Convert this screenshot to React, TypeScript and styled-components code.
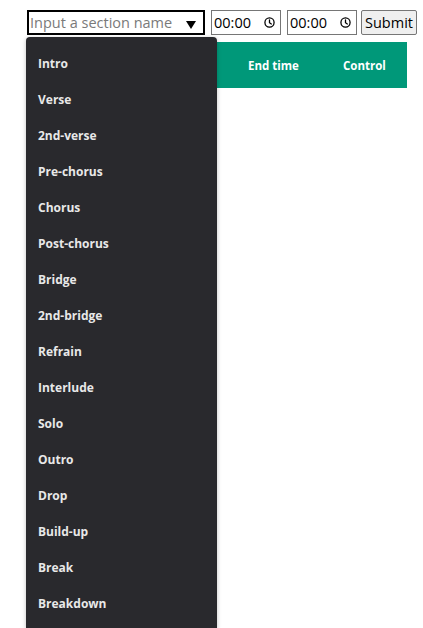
import {FC, useState} from "react";
import styled, {createGlobalStyle} from "styled-components";

const GlobalStyle = createGlobalStyle`
  html {
    overflow: hidden;
  }
  body {
    margin: 0;
    padding: 0;
    background: #ffffff;
    font-family: "Open Sans", "Noto Sans", sans-serif;
  }
`

const StyledPage = styled.div`
  min-height: 100vh;
  box-sizing: border-box;
  padding: 10px 0 0 27px;
`
const StyledForm = styled.form`
  display: flex;
  align-items: center;
  gap: 6px;
  position: relative;
`
const StyledNameBox = styled.div`
  position: relative;
  width: 178px;
  height: 25px;
  box-sizing: border-box;
  border: 2px solid #000000;
  display: flex;
  align-items: center;
`
const StyledNameInput = styled.input`
  border: none;
  outline: none;
  flex: 1;
  min-width: 0;
  height: 100%;
  padding: 0 0 0 1px;
  font-family: "Open Sans", "Noto Sans", sans-serif;
  font-size: 14.5px;
  color: #000;
  background: transparent;

  &::placeholder {
    color: #7a7a7a;
  }
`
const StyledArrow = styled.span`
  width: 0;
  height: 0;
  border-left: 5px solid transparent;
  border-right: 5px solid transparent;
  border-top: 8px solid #000;
  margin: 4px 7px 0 0;
`
const StyledTimeBox = styled.div`
  width: 70px;
  height: 25px;
  box-sizing: border-box;
  border: 1px solid #767676;
  display: flex;
  align-items: center;
  justify-content: space-between;
  padding: 0 5px 0 2px;
  font-family: "Open Sans", "Noto Sans", sans-serif;
  font-size: 14.5px;
  color: #000;
`
const StyledSubmit = styled.button`
  height: 25px;
  width: 56px;
  margin-left: -2px;
  box-sizing: border-box;
  border: 1px solid #767676;
  border-radius: 2px;
  background: #efefef;
  font-family: "Open Sans", "Noto Sans", sans-serif;
  font-size: 14.5px;
  color: #000;
  padding: 0;
`
const StyledDropdown = styled.ul`
  position: absolute;
  left: -1px;
  top: 27px;
  width: 191px;
  height: 591px;
  overflow: hidden;
  margin: 0;
  padding: 8px 0 0;
  box-sizing: border-box;
  list-style: none;
  background: #29292d;
  border-radius: 4px 4px 0 0;
  box-shadow: 0 1px 4px rgba(0, 0, 0, 0.25);
  z-index: 10;
`
const StyledOption = styled.li`
  height: 36px;
  display: flex;
  align-items: center;
  padding-left: 12px;
  font-size: 12px;
  font-weight: 700;
  color: #e8e8e8;
`
const StyledTable = styled.div`
  margin-top: 7px;
  width: 380px;
`
const StyledHeadRow = styled.div`
  display: grid;
  grid-template-columns: 110px 96px 95px 79px;
  height: 46px;
  align-items: center;
  background: #009879;
  color: #ffffff;
`
const StyledHeadCell = styled.div`
  padding: 0 15px;
  font-size: 11.5px;
  font-weight: 700;
  white-space: nowrap;
`

const sections = [
    "Intro", "Verse", "2nd-verse", "Pre-chorus", "Chorus", "Post-chorus",
    "Bridge", "2nd-bridge", "Refrain", "Interlude", "Solo", "Outro",
    "Drop", "Build-up", "Break", "Breakdown",
]

const ClockIcon: FC = () => (
    <svg width="11" height="11" viewBox="0 0 12 12" fill="none" stroke="#000" strokeWidth="1.4">
        <circle cx="6" cy="6" r="5"/>
        <path d="M6 3.2V6.2L8 7.6" strokeLinecap="round"/>
    </svg>
)

export default function App() {
    const [name, setName] = useState('')
    return (
        <StyledPage>
            <GlobalStyle/>
            <StyledForm onSubmit={(e) => e.preventDefault()}>
                <StyledNameBox>
                    <StyledNameInput
                        value={name}
                        onChange={(e) => setName(e.target.value)}
                        placeholder="Input a section name"
                    />
                    <StyledArrow/>
                </StyledNameBox>
                <StyledTimeBox>00:00<ClockIcon/></StyledTimeBox>
                <StyledTimeBox>00:00<ClockIcon/></StyledTimeBox>
                <StyledSubmit type="submit">Submit</StyledSubmit>
                <StyledDropdown>
                    {sections.map(s => (
                        <StyledOption key={s}>{s}</StyledOption>
                    ))}
                </StyledDropdown>
            </StyledForm>
            <StyledTable>
                <StyledHeadRow>
                    <StyledHeadCell>Section</StyledHeadCell>
                    <StyledHeadCell>Start time</StyledHeadCell>
                    <StyledHeadCell>End time</StyledHeadCell>
                    <StyledHeadCell>Control</StyledHeadCell>
                </StyledHeadRow>
            </StyledTable>
        </StyledPage>
    )
}
